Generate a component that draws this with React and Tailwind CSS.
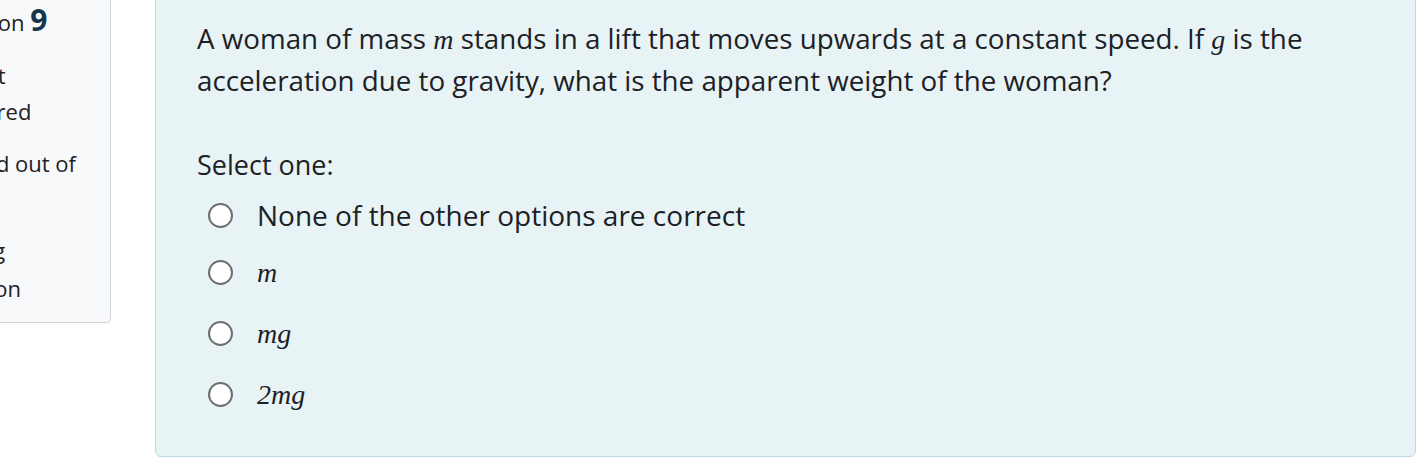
import React from 'react';

const options = [
  { id: 'a', label: 'None of the other options are correct', math: false },
  { id: 'b', label: 'm', math: true },
  { id: 'c', label: 'mg', math: true },
  { id: 'd', label: '2mg', math: true },
];

const M = ({ children }) => (
  <span className="italic text-[28px]" style={{ fontFamily: '"Liberation Serif", serif' }}>
    {children}
  </span>
);

export default function App() {
  return (
    <div
      className="w-[1418px] h-[474px] overflow-hidden bg-white text-[#1d2125]"
      style={{ fontFamily: '"Open Sans", "Noto Sans", sans-serif' }}
    >
      <div className="flex items-start -mt-[30px]">
        {/* question info sidebar, partly scrolled off to the left */}
        <div className="shrink-0 w-[190px] -ml-[79px] h-[353px] bg-[#f8f9fa] border border-[#cfd2d6] rounded-[4px] pt-[33px] pl-[9px] text-[22px] leading-[36px]">
          <h3 className="text-[22px] leading-[32px] whitespace-nowrap">
            Question <span className="font-bold text-[30px] text-[#15354f]">9</span>
          </h3>
          <div className="mt-[19px] whitespace-nowrap">Not yet</div>
          <div className="whitespace-nowrap">answered</div>
          <div className="mt-[16px] whitespace-nowrap">Marked out of</div>
          <div className="whitespace-nowrap">1.00</div>
          <div className="mt-[14px] ml-[33px] leading-[38px] whitespace-nowrap">Flag</div>
          <div className="leading-[38px] whitespace-nowrap">question</div>
        </div>

        {/* question content */}
        <div className="ml-[44px] w-[1261px] h-[487px] bg-[#e7f3f5] border border-[#b8dce2] rounded-[6px] pt-[47px] pl-[41px] pr-[40px]">
          <p className="text-[27.75px] leading-[40px]">
            A woman of mass <M>m</M> stands in a lift that moves upwards at a constant speed. If <M>g</M> is the
            acceleration due to gravity, what is the apparent weight of the woman?
          </p>

          <div className="mt-[45px] text-[27px] leading-[40px]">Select one:</div>

          <div className="mt-[10px] flex flex-col pl-[11px]">
            {options.map((o, i) => (
              <label
                key={o.id}
                className={`flex items-center h-[40px] text-[28px] ${i === 0 ? '' : i === 1 ? 'mt-[17px]' : 'mt-[21px]'}`}
              >
                <span className="w-[25px] h-[25px] rounded-full border-2 border-[#6b6f73] bg-white shrink-0" />
                <span className="ml-[24px]">{o.math ? <M>{o.label}</M> : o.label}</span>
              </label>
            ))}
          </div>
        </div>
      </div>
    </div>
  );
}
